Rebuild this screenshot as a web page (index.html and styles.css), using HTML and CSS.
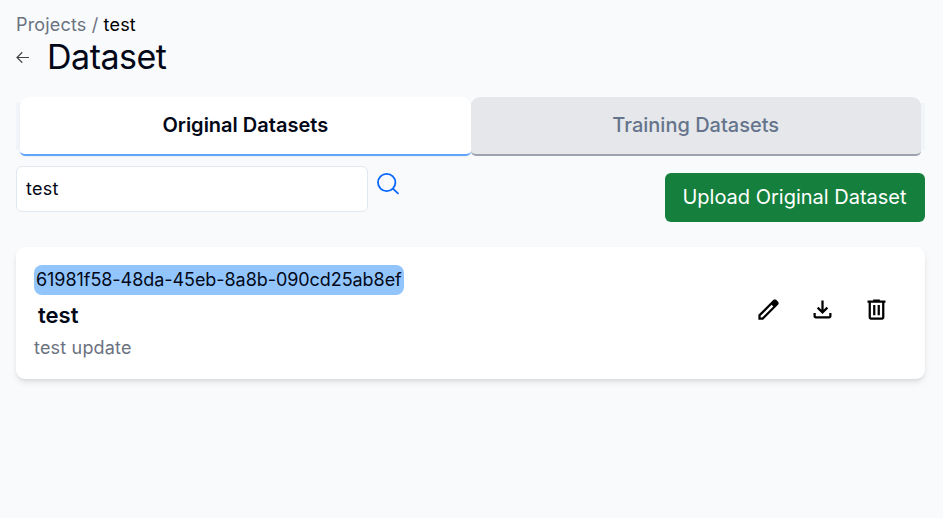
FILE: index.html
```html
<!DOCTYPE html>
<html lang="en">
<head>
<meta charset="utf-8">
<title>Dataset</title>
<link rel="stylesheet" href="styles.css">
</head>
<body>
<nav class="crumbs">Projects / <span class="current">test</span></nav>
<header class="heading">
  <svg class="back" viewBox="0 0 14 12"><path d="M13 6.500H1M6.300 1.300 1 6.500l5.300 5.200"/></svg>
  <h1>Dataset</h1>
</header>
<div class="tabs">
  <button class="tab active">Original Datasets</button>
  <button class="tab">Training Datasets</button>
</div>
<div class="toolbar">
  <input class="search" type="text" value="test" aria-label="Search">
  <svg class="search-icon" viewBox="0 0 24 24"><circle cx="9.700" cy="10.500" r="8.700"/><path d="m15.900 16.700 5.600 5.200"/></svg>
  <button class="upload">Upload Original Dataset</button>
</div>
<main class="card">
  <div class="info">
    <span class="id">61981f58-48da-45eb-8a8b-090cd25ab8ef</span>
    <h2>test</h2>
    <p>test update</p>
  </div>
  <div class="actions">
    <svg viewBox="0 -960 960 960"><path d="M200-200h57l391-391-57-57-391 391v57Zm-80 80v-170l528-527q12-11 26.500-17t30.500-6q16 0 31 6t26 18l55 56q12 11 17.500 26t5.500 30q0 16-5.500 30.500T817-647L290-120H120Z"/></svg>
    <svg viewBox="0 -960 960 960"><path d="M480-320 280-520l56-58 104 104v-326h80v326l104-104 56 58-200 200ZM240-160q-33 0-56.500-23.500T160-240v-120h80v120h480v-120h80v120q0 33-23.500 56.500T720-160H240Z"/></svg>
    <svg viewBox="0 -960 960 960"><path d="M280-120q-33 0-56.500-23.500T200-200v-520h-40v-80h200v-40h240v40h200v80h-40v520q0 33-23.500 56.500T680-120H280Zm400-600H280v520h400v-520ZM360-280h80v-360h-80v360Zm160 0h80v-360h-80v360Z"/></svg>
  </div>
</main>
</body>
</html>
```
FILE: styles.css
```css
* { box-sizing: border-box; }
html { background: #f8fafc; }
body {
  min-height: 100vh;
  margin: 0;
  padding: 14px 18px 0 16px;
  color: #020817;
  font: 18px/22px Inter, sans-serif;
}
h1, h2, p { margin: 0; font-weight: 400; }
button, input { font: inherit; color: inherit; }
svg { display: block; flex: none; }
.crumbs { color: #6b7280; letter-spacing: .17px; }
.current { color: #000; }
.heading { display: flex; align-items: center; gap: 17px; height: 42px; }
.heading h1 { font-size: 34px; line-height: 42px; letter-spacing: -.5px; }
.back { width: 14px; height: 12px; fill: none; stroke: #444; stroke-width: 1.2; }
.tabs {
  display: flex;
  height: 59px;
  margin-top: 19px;
  padding: 0 4px;
  background: linear-gradient(#f1f5f9, #f1f5f9) 0 6px / 100% 47px no-repeat;
  border-radius: 7px;
}
.tab {
  flex: 1;
  padding: 0 0 2px;
  border: 0;
  border-bottom: 2px solid #9ca3af;
  border-radius: 9px 9px 5px 5px;
  background: #e5e7eb;
  color: #64748b;
  font-size: 20px;
  font-weight: 500;
}
.tab.active {
  border-color: #60a5fa;
  background: #fff;
  color: #020817;
  font-weight: 600;
  box-shadow: 0 1px 2px rgba(0, 0, 0, .05);
}
.toolbar { display: flex; align-items: flex-start; margin-top: 10px; }
.search {
  width: 352px;
  height: 46px;
  padding: 0 9px 2px;
  border: 1px solid #e2e8f0;
  border-radius: 6px;
  background: #fff;
  letter-spacing: .3px;
}
.search-icon { width: 24px; height: 24px; margin: 6px 0 0 9px; fill: none; stroke: #0866ff; stroke-width: 1.8; }
.upload {
  width: 260px;
  height: 49px;
  margin: 7px 0 0 auto;
  padding: 0 1px 2px 0;
  border: 0;
  border-radius: 6px;
  background: #15803d;
  color: #fff;
  font-size: 20px;
}
.card {
  display: flex;
  justify-content: space-between;
  height: 132px;
  margin-top: 25px;
  padding: 18px 35px 0 18px;
  border-radius: 9px;
  background: #fff;
  box-shadow: 0 4px 7px -1px rgba(0, 0, 0, .1), 0 2px 4px -2px rgba(0, 0, 0, .1);
}
.id { display: block; width: 370px; height: 30px; padding: 0 2px; border-radius: 8px; background: #93c5fd; line-height: 30px; letter-spacing: -.06px; }
.info h2 { margin: 6px 0 0 4px; font-size: 22px; font-weight: 600; line-height: 28px; }
.info p { margin-top: 8px; color: #6b7280; line-height: 22px; letter-spacing: .18px; }
.actions { display: flex; gap: 27px; padding: 30.5px .5px 0 0; }
.actions svg { width: 27px; height: 27px; fill: #000; }
```
